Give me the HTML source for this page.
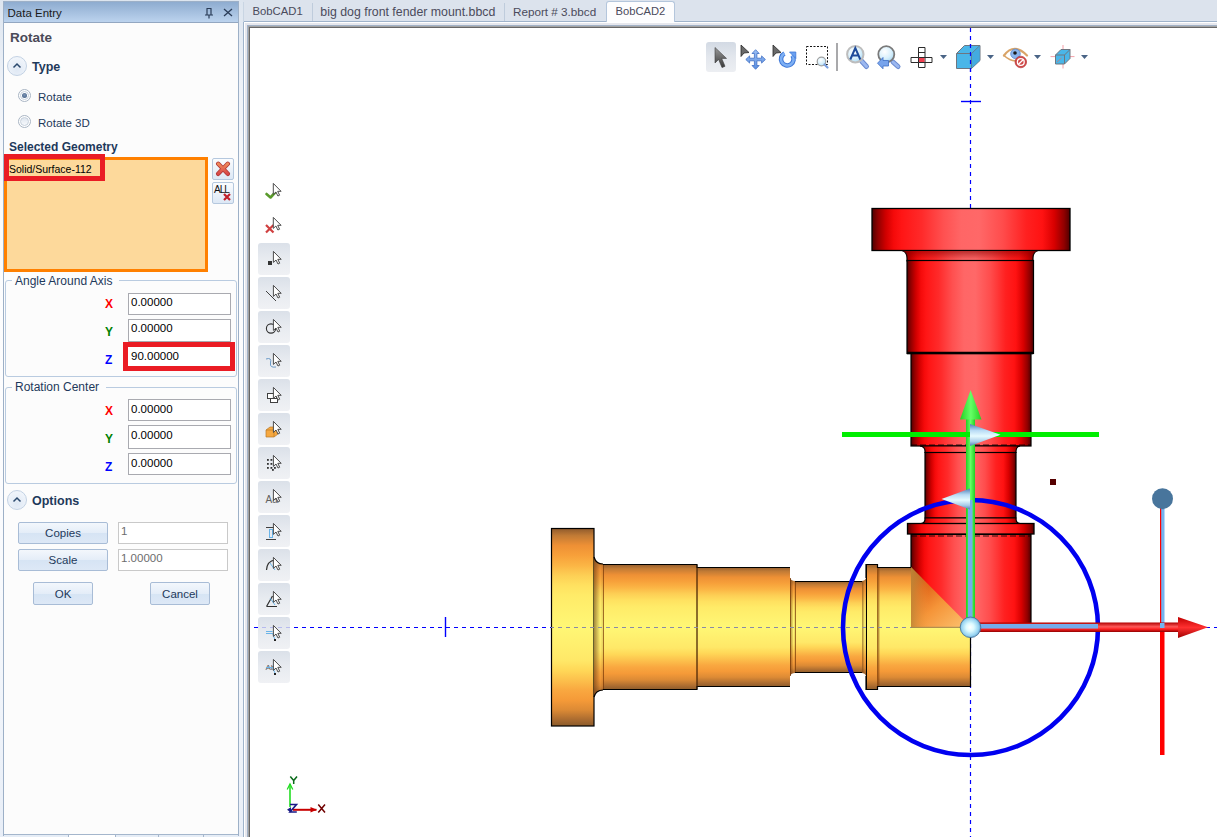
<!DOCTYPE html>
<html><head><meta charset="utf-8">
<style>
*{box-sizing:border-box}
html,body{margin:0;padding:0}
body{width:1217px;height:837px;overflow:hidden;position:relative;background:linear-gradient(#dde5ef 0%,#eef2f8 10%,#fbfcfd 25%,#fdfdfe 50%,#f8fafd 70%,#e8eef7 100%);font-family:"Liberation Sans",sans-serif;font-size:12px;color:#1e395b}
.a{position:absolute}
.t{position:absolute;white-space:nowrap;line-height:1}
/* panel */
#panel{left:3px;top:1px;width:236px;height:835px;background:#fcfcfc;border:1px solid #9db0c7}
#phead{left:0;top:0;width:234px;height:21px;background:linear-gradient(#8eacd0,#bcd2ec);border-bottom:1px solid #94a8c2}
.btn{position:absolute;border:1px solid #a8bcd6;border-radius:2px;background:linear-gradient(#f3f7fc 0%,#e4edf8 50%,#d6e4f4 51%,#dde8f6 100%);color:#1e395b;text-align:center;font-size:12px}
.inp{position:absolute;background:#fff;border:1px solid #a9aab0}
.grp{position:absolute;border:1px solid #b9cbe0;border-radius:3px}
.lx{position:absolute;font-weight:bold;font-size:12px;line-height:1}
.exp{position:absolute;width:20px;height:20px;border-radius:50%;border:1px solid #c3d2e4;background:radial-gradient(circle at 50% 70%,#dfe8f4,#f6f9fd)}
.radio{position:absolute;width:13px;height:13px;border-radius:50%;border:1px solid #9aaabb;background:#fff}
</style></head><body>

<!-- LEFT PANEL -->
<div id="panel" class="a"></div>
<div class="a" style="left:4px;top:2px;width:234px;height:20px;background:linear-gradient(#8eacd0,#bcd3ee)"></div>
<div class="a" style="left:4px;top:22px;width:234px;height:1px;background:#93a7c1"></div>
<div class="t" style="left:7.5px;top:8px;font-size:11.5px;color:#1a1a1a">Data Entry</div>
<!-- pin -->
<svg class="a" style="left:204px;top:7px" width="10" height="12" viewBox="0 0 10 12"><path d="M2.5 1.5h5M3 1.5v6M7 1.5v6M1 8h8M5 8v3.5" stroke="#2a3c58" stroke-width="1.2" fill="none"/></svg>
<!-- close -->
<svg class="a" style="left:223px;top:8px" width="10" height="9" viewBox="0 0 10 9"><path d="M1 1L9 8M9 1L1 8" stroke="#2a3c58" stroke-width="1.3" fill="none"/></svg>

<div class="t" style="left:10px;top:31px;font-size:13.5px;font-weight:bold;color:#4a4a58">Rotate</div>

<div class="exp" style="left:7px;top:56px"></div>
<svg class="a" style="left:12px;top:62px" width="10" height="7"><path d="M1.5 5.5L5 2L8.5 5.5" stroke="#2c4a6e" stroke-width="1.5" fill="none"/></svg>
<div class="t" style="left:32px;top:61px;font-size:12.5px;font-weight:bold;color:#1e395b">Type</div>

<div class="radio" style="left:18px;top:89px;border-color:#a9b5c4"></div>
<div class="a" style="left:20px;top:91px;width:9px;height:9px;border-radius:50%;border:1px solid #c5cfdb;background:#fff"></div>
<div class="a" style="left:22px;top:93px;width:5px;height:5px;border-radius:50%;background:radial-gradient(circle at 50% 40%,#7d94b4,#3c5a80)"></div>
<div class="t" style="left:38px;top:92px;font-size:11.5px;color:#1e395b">Rotate</div>
<div class="radio" style="left:18px;top:115px;border-color:#a9b5c4"></div>
<div class="a" style="left:20px;top:117px;width:9px;height:9px;border-radius:50%;border:1px solid #c5cfdb;background:linear-gradient(#dfe6ef,#f7f9fc)"></div>
<div class="t" style="left:38px;top:118px;font-size:11.5px;color:#1e395b">Rotate 3D</div>

<div class="t" style="left:9px;top:141px;font-size:12px;font-weight:bold;color:#1e395b">Selected Geometry</div>

<div class="a" style="left:4px;top:157px;width:204px;height:115px;background:#fdd99b;border:3px solid #ff8000"></div>
<div class="a" style="left:4px;top:154px;width:101px;height:27px;border:5px solid #ea1c24"></div>
<div class="t" style="left:9px;top:163.5px;font-size:10.5px;color:#000">Solid/Surface-112</div>

<div class="btn" style="left:212px;top:158px;width:22px;height:22px;border-color:#b5c8de;background:linear-gradient(#fbfcfe,#dde8f5)"></div>
<svg class="a" style="left:215px;top:161px" width="16" height="16" viewBox="0 0 16 16"><defs><linearGradient id="xg" x1="0" y1="0" x2="0" y2="1"><stop offset="0" stop-color="#f08a5a"/><stop offset="1" stop-color="#d84848"/></linearGradient></defs><path d="M3.2 2.8L12.8 12.8M12.8 2.8L3.2 12.8" stroke="#b03636" stroke-width="4.4" stroke-linecap="round"/><path d="M3.2 2.8L12.8 12.8M12.8 2.8L3.2 12.8" stroke="url(#xg)" stroke-width="2.8" stroke-linecap="round"/></svg>
<div class="btn" style="left:212px;top:182px;width:22px;height:22px;border-color:#b5c8de;background:linear-gradient(#fbfcfe,#dde8f5)"></div>
<div class="t" style="left:214px;top:185px;font-size:10px;color:#111;letter-spacing:-1px">ALL</div>
<svg class="a" style="left:222px;top:192px" width="10" height="10" viewBox="0 0 10 10"><path d="M2 2L8 8M8 2L2 8" stroke="#c0202a" stroke-width="2.2"/></svg>

<!-- group 1 -->
<div class="grp" style="left:5px;top:280px;width:232px;height:97px"></div>
<div class="a" style="left:12px;top:276px;width:107px;height:8px;background:#fcfcfc"></div>
<div class="t" style="left:15px;top:274.8px;font-size:12px;color:#1e395b">Angle Around Axis</div>
<div class="lx" style="left:105px;top:298px;color:#f00">X</div>
<div class="lx" style="left:105px;top:326px;color:#008000">Y</div>
<div class="lx" style="left:105px;top:354px;color:#00f">Z</div>
<div class="inp" style="left:128px;top:293px;width:103px;height:22px"></div>
<div class="t" style="left:131px;top:296.5px;font-size:11.5px;color:#000">0.00000</div>
<div class="inp" style="left:128px;top:319px;width:103px;height:23px"></div>
<div class="t" style="left:131px;top:322.5px;font-size:11.5px;color:#000">0.00000</div>
<div class="inp" style="left:128px;top:345px;width:103px;height:22px;border:none"></div>
<div class="a" style="left:123px;top:342px;width:112px;height:29px;border:5px solid #ea1c24"></div>
<div class="t" style="left:131px;top:350.5px;font-size:11.5px;color:#000">90.00000</div>

<!-- group 2 -->
<div class="grp" style="left:5px;top:387px;width:232px;height:97px"></div>
<div class="a" style="left:12px;top:382px;width:94px;height:8px;background:#fcfcfc"></div>
<div class="t" style="left:15px;top:381px;font-size:12px;color:#1e395b">Rotation Center</div>
<div class="lx" style="left:105px;top:405px;color:#f00">X</div>
<div class="lx" style="left:105px;top:433px;color:#008000">Y</div>
<div class="lx" style="left:105px;top:461px;color:#00f">Z</div>
<div class="inp" style="left:128px;top:399px;width:103px;height:22px"></div>
<div class="t" style="left:131px;top:403.5px;font-size:11.5px;color:#000">0.00000</div>
<div class="inp" style="left:128px;top:425px;width:103px;height:24px"></div>
<div class="t" style="left:131px;top:429.5px;font-size:11.5px;color:#000">0.00000</div>
<div class="inp" style="left:128px;top:453px;width:103px;height:22px"></div>
<div class="t" style="left:131px;top:457.5px;font-size:11.5px;color:#000">0.00000</div>

<!-- options -->
<div class="exp" style="left:7px;top:490px"></div>
<svg class="a" style="left:12px;top:496px" width="10" height="7"><path d="M1.5 5.5L5 2L8.5 5.5" stroke="#2c4a6e" stroke-width="1.5" fill="none"/></svg>
<div class="t" style="left:32px;top:495px;font-size:12.5px;font-weight:bold;color:#1e395b">Options</div>

<div class="btn" style="left:18px;top:522px;width:90px;height:22px"></div>
<div class="t" style="left:18px;top:528px;width:90px;text-align:center;font-size:11.5px;color:#1e395b">Copies</div>
<div class="btn" style="left:18px;top:549px;width:90px;height:22px"></div>
<div class="t" style="left:18px;top:555px;width:90px;text-align:center;font-size:11.5px;color:#1e395b">Scale</div>
<div class="inp" style="left:118px;top:522px;width:110px;height:22px;border-color:#c9c9c9"></div>
<div class="t" style="left:121px;top:526px;font-size:11.5px;color:#6d6d6d">1</div>
<div class="inp" style="left:118px;top:549px;width:110px;height:22px;border-color:#c9c9c9"></div>
<div class="t" style="left:121px;top:553px;font-size:11.5px;color:#6d6d6d">1.00000</div>

<div class="btn" style="left:33px;top:582px;width:60px;height:23px"></div>
<div class="t" style="left:33px;top:588.5px;width:60px;text-align:center;font-size:11.5px;color:#1e395b">OK</div>
<div class="btn" style="left:150px;top:582px;width:60px;height:23px"></div>
<div class="t" style="left:150px;top:588.5px;width:60px;text-align:center;font-size:11.5px;color:#1e395b">Cancel</div>

<!-- bottom tabs -->
<div class="a" style="left:4px;top:835px;width:234px;height:2px;background:#e6edf6"></div>
<div class="a" style="left:69px;top:835px;width:46px;height:2px;background:#fff"></div>
<div class="a" style="left:4px;top:834px;width:234px;height:1px;background:#a4b6cc"></div>
<div class="a" style="left:68px;top:834px;width:1px;height:3px;background:#a4b6cc"></div>
<div class="a" style="left:115px;top:834px;width:1px;height:3px;background:#a4b6cc"></div>
<div class="a" style="left:158px;top:834px;width:1px;height:3px;background:#a4b6cc"></div>
<div class="a" style="left:203px;top:834px;width:1px;height:3px;background:#a4b6cc"></div>


<!-- TAB STRIP -->
<div class="a" style="left:243px;top:0;width:974px;height:22px;background:#dce3ed"></div>
<div class="a" style="left:243px;top:21px;width:974px;height:1px;background:#9fb3cb"></div>
<div class="a" style="left:243px;top:2px;width:1px;height:20px;background:#c9d5e3"></div>
<div class="a" style="left:312px;top:3px;width:1px;height:18px;background:#bfccdc"></div>
<div class="a" style="left:504px;top:3px;width:1px;height:18px;background:#bfccdc"></div>
<div class="a" style="left:606px;top:1px;width:69px;height:21px;background:#fdfdfe;border:1px solid #b4c6dc;border-bottom:none;border-radius:3px 3px 0 0"></div>
<div class="t" style="left:252.5px;top:6px;font-size:11.3px;color:#4b4b5c">BobCAD1</div>
<div class="t" style="left:320.3px;top:6px;font-size:12.35px;color:#4b4b5c">big dog front fender mount.bbcd</div>
<div class="t" style="left:513px;top:6px;font-size:11.7px;color:#4b4b5c">Report # 3.bbcd</div>
<div class="t" style="left:615.5px;top:6px;font-size:11.2px;color:#4b4b5c">BobCAD2</div>

<!-- VIEWPORT FRAME -->
<div class="a" style="left:243px;top:22px;width:974px;height:815px;background:#fff;border-left:1px solid #9fb3cb"></div>
<div class="a" style="left:245px;top:23px;width:972px;height:814px;background:#e6e7ed"></div>
<div class="a" style="left:247px;top:25px;width:970px;height:812px;background:#a2b2c7"></div>
<div class="a" style="left:248px;top:26px;width:969px;height:811px;background:#a3a3a3"></div>
<div class="a" style="left:249px;top:27px;width:968px;height:810px;background:#676767"></div>
<div class="a" style="left:250px;top:28px;width:967px;height:809px;background:#fff"></div>

<svg class="a" style="left:0;top:0" width="1217" height="837" viewBox="0 0 1217 837">
<defs>
<linearGradient id="og" x1="0" y1="0" x2="0" y2="1">
 <stop offset="0" stop-color="#8f5a2c"/>
 <stop offset="0.035" stop-color="#c07a35"/>
 <stop offset="0.086" stop-color="#ee9035"/>
 <stop offset="0.136" stop-color="#f7a03a"/>
 <stop offset="0.187" stop-color="#fbb545"/>
 <stop offset="0.237" stop-color="#fdcf55"/>
 <stop offset="0.288" stop-color="#ffe160"/>
 <stop offset="0.338" stop-color="#ffeb68"/>
 <stop offset="0.5" stop-color="#fff775"/>
 <stop offset="0.667" stop-color="#ffe868"/>
 <stop offset="0.717" stop-color="#ffd858"/>
 <stop offset="0.768" stop-color="#fcc04c"/>
 <stop offset="0.818" stop-color="#f9a840"/>
 <stop offset="0.869" stop-color="#f59a38"/>
 <stop offset="0.919" stop-color="#dc8a35"/>
 <stop offset="0.97" stop-color="#a86a30"/>
 <stop offset="1" stop-color="#8a5a2a"/>
</linearGradient>
<linearGradient id="ogl" x1="0" y1="0" x2="0" y2="1">
 <stop offset="0.000" stop-color="#fff775"/>
 <stop offset="0.334" stop-color="#ffe868"/>
 <stop offset="0.434" stop-color="#ffd858"/>
 <stop offset="0.536" stop-color="#fcc04c"/>
 <stop offset="0.636" stop-color="#f9a840"/>
 <stop offset="0.738" stop-color="#f59a38"/>
 <stop offset="0.838" stop-color="#dc8a35"/>
 <stop offset="0.940" stop-color="#a86a30"/>
 <stop offset="1.000" stop-color="#8a5a2a"/>
</linearGradient>
<linearGradient id="rg" x1="0" y1="0" x2="1" y2="0">
 <stop offset="0" stop-color="#500000"/>
 <stop offset="0.03" stop-color="#900000"/>
 <stop offset="0.07" stop-color="#d00000"/>
 <stop offset="0.11" stop-color="#f50a0a"/>
 <stop offset="0.15" stop-color="#ff1515"/>
 <stop offset="0.25" stop-color="#ff2a2a"/>
 <stop offset="0.36" stop-color="#ff5050"/>
 <stop offset="0.45" stop-color="#ff6666"/>
 <stop offset="0.54" stop-color="#ff6868"/>
 <stop offset="0.66" stop-color="#ff4c4c"/>
 <stop offset="0.78" stop-color="#ff2020"/>
 <stop offset="0.86" stop-color="#ff1212"/>
 <stop offset="0.92" stop-color="#d80000"/>
 <stop offset="0.97" stop-color="#900000"/>
 <stop offset="1" stop-color="#500000"/>
</linearGradient>
<linearGradient id="tri" x1="911" y1="567" x2="960" y2="627" gradientUnits="userSpaceOnUse">
 <stop offset="0" stop-color="#8a4a14"/>
 <stop offset="0.3" stop-color="#e06418"/>
 <stop offset="0.6" stop-color="#f59438"/>
 <stop offset="1" stop-color="#fbbc68"/>
</linearGradient>
<linearGradient id="trih" x1="0" y1="0" x2="1" y2="0">
 <stop offset="0" stop-color="#c08838" stop-opacity="0.9"/>
 <stop offset="0.3" stop-color="#f09a40" stop-opacity="0"/>
 <stop offset="1" stop-color="#f09a40" stop-opacity="0"/>
</linearGradient>
<linearGradient id="fil" x1="0" y1="0" x2="1" y2="0">
 <stop offset="0" stop-color="#5a3010" stop-opacity="0.55"/>
 <stop offset="0.7" stop-color="#5a3010" stop-opacity="0"/>
 <stop offset="1" stop-color="#5a3010" stop-opacity="0.15"/>
</linearGradient>
<linearGradient id="gsh" x1="0" y1="0" x2="1" y2="0">
 <stop offset="0" stop-color="#22d022"/>
 <stop offset="0.5" stop-color="#66ff66"/>
 <stop offset="1" stop-color="#22d022"/>
</linearGradient>
<linearGradient id="cone" x1="0" y1="0" x2="0" y2="1">
 <stop offset="0" stop-color="#4f7fb5"/>
 <stop offset="0.3" stop-color="#b9dcf5"/>
 <stop offset="0.55" stop-color="#e6fbff"/>
 <stop offset="0.8" stop-color="#a8cce8"/>
 <stop offset="1" stop-color="#4f7fb5"/>
</linearGradient>
<linearGradient id="rsh" x1="0" y1="0" x2="0" y2="1">
 <stop offset="0" stop-color="#b00000"/>
 <stop offset="0.45" stop-color="#ff5a5a"/>
 <stop offset="0.7" stop-color="#ff2020"/>
 <stop offset="1" stop-color="#900000"/>
</linearGradient>
<linearGradient id="rah" x1="0" y1="0" x2="0" y2="1">
 <stop offset="0" stop-color="#c00000"/>
 <stop offset="0.5" stop-color="#ff3030"/>
 <stop offset="1" stop-color="#a00000"/>
</linearGradient>
<linearGradient id="shd" x1="0" y1="0" x2="0" y2="1">
 <stop offset="0" stop-color="#800000" stop-opacity="0.55"/>
 <stop offset="1" stop-color="#800000" stop-opacity="0"/>
</linearGradient>
<radialGradient id="sph" cx="0.48" cy="0.5" r="0.55">
 <stop offset="0" stop-color="#ffffff"/>
 <stop offset="0.35" stop-color="#dcfaff"/>
 <stop offset="0.75" stop-color="#98d4f2"/>
 <stop offset="1" stop-color="#5a92c0"/>
</radialGradient>
</defs>
<line x1="250" y1="627.5" x2="1217" y2="627.5" stroke="#0000ff" stroke-width="1.2" stroke-dasharray="4 4" stroke-dashoffset="4"/>
<line x1="970.5" y1="28" x2="970.5" y2="837" stroke="#0000ff" stroke-width="1.2" stroke-dasharray="4 4" stroke-dashoffset="0"/>
<line x1="445.5" y1="617" x2="445.5" y2="637" stroke="#0000ff" stroke-width="1.4"/>
<line x1="961" y1="101.5" x2="981" y2="101.5" stroke="#0000ff" stroke-width="1.4"/>
<rect x="551.5" y="528.5" width="42.5" height="197.5" fill="url(#og)" stroke="#000" stroke-width="1.2"/>
<path d="M594 557 Q596 564 603 564 L603 690 Q596 690 594 697 Z" fill="url(#og)"/>
<path d="M594 557 Q596 564 603 564 L603 690 Q596 690 594 697 Z" fill="url(#fil)"/>
<path d="M594 557 Q596 564 603 564 M603 690 Q596 690 594 697" stroke="#000" stroke-width="1.2" fill="none"/>
<rect x="603" y="564" width="94" height="126" fill="url(#og)"/>
<rect x="697" y="567" width="93" height="120" fill="url(#og)"/>
<path d="M790 578 Q791 581 795 581 L795 673 Q791 673 790 676 Z" fill="url(#og)"/>
<path d="M790 578 Q791 581 795 581 L795 673 Q791 673 790 676 Z" fill="url(#fil)"/>
<rect x="795" y="581" width="67" height="92" fill="url(#og)"/>
<path d="M862 581 Q865 581 866 578 L866 676 Q865 673 862 673 Z" fill="url(#og)"/>
<path d="M862 581 Q865 581 866 578 L866 676 Q865 673 862 673 Z" fill="url(#fil)"/>
<rect x="866" y="564" width="12" height="126" fill="url(#og)"/>
<rect x="878" y="567" width="33" height="120" fill="url(#og)"/>
<rect x="911" y="627" width="59" height="60" fill="url(#ogl)"/>
<path d="M603 564.5 H697 V567.5 H790 M795 581.5 H862 M866 578 V564.5 H877.5 V567.5 H911 M603 689.5 H697 V686.5 H790 M795 672.5 H862 M866 676 V689.5 H877.5 V686.5 H970.5 V627" stroke="#000" stroke-width="1.2" fill="none"/>
<line x1="603.5" y1="565" x2="603.5" y2="689" stroke="#7a3a08" stroke-width="0.9" opacity="0.8"/>
<line x1="697" y1="568" x2="697" y2="686" stroke="#7a3a08" stroke-width="0.9" opacity="0.8"/>
<line x1="790.5" y1="578" x2="790.5" y2="676" stroke="#7a3a08" stroke-width="0.9" opacity="0.8"/>
<line x1="795.5" y1="582" x2="795.5" y2="672" stroke="#7a3a08" stroke-width="0.9" opacity="0.8"/>
<line x1="877.5" y1="568" x2="877.5" y2="686" stroke="#7a3a08" stroke-width="0.9" opacity="0.8"/>
<line x1="878.8" y1="568" x2="878.8" y2="686" stroke="#7a3a08" stroke-width="0.9" opacity="0.8"/>
<line x1="866.5" y1="565" x2="866.5" y2="689" stroke="#000" stroke-width="1"/>
<line x1="697" y1="565" x2="697" y2="689" stroke="#3a2008" stroke-width="0.9"/>
<line x1="551" y1="627.5" x2="911" y2="627.5" stroke="#8a8aa6" stroke-width="1.2" stroke-dasharray="4 4" stroke-dashoffset="1"/>
<rect x="872" y="208.5" width="198" height="42" fill="url(#rg)" stroke="#000" stroke-width="1.3"/>
<path d="M902 250.5 Q907 252 907 258 L907 261 L1033 261 L1033 258 Q1033 252 1038 250.5 Z" fill="url(#rg)" stroke="#000" stroke-width="1.2"/>
<path d="M902 251 Q907 252 907 258 L907 260 L1033 260 L1033 258 Q1033 252 1038 251 Z" fill="url(#shd)"/>
<rect x="907" y="260.5" width="126.5" height="93" fill="url(#rg)" stroke="#000" stroke-width="1.2"/>
<rect x="911" y="353.5" width="120" height="92.5" fill="url(#rg)" stroke="#000" stroke-width="1.2"/>
<line x1="907" y1="353" x2="1033" y2="353" stroke="#000" stroke-width="2.4"/>
<path d="M920 446 Q925 447 925 451 L925 452.5 L1016 452.5 L1016 451 Q1016 447 1020 446 Z" fill="url(#rg)" stroke="#000" stroke-width="1.2"/>
<rect x="925" y="452.5" width="91" height="65.5" fill="url(#rg)" stroke="#000" stroke-width="1.2"/>
<path d="M925 518 L925 519 Q925 523 921 523.5 L1020 523.5 Q1016 523 1016 519 L1016 518 Z" fill="url(#rg)" stroke="#000" stroke-width="1.2"/>
<rect x="907.5" y="523.5" width="126.5" height="10.5" fill="url(#rg)" stroke="#000" stroke-width="1.3"/>
<rect x="911" y="534.5" width="120" height="93" fill="url(#rg)"/>
<path d="M911 568 V534.5 H1031 V627" fill="none" stroke="#000" stroke-width="1.2"/>
<line x1="911" y1="536" x2="1031" y2="536" stroke="#000" stroke-width="0.8" stroke-dasharray="6 3"/>
<line x1="911" y1="445" x2="1031" y2="445" stroke="#000" stroke-width="0.8" stroke-dasharray="6 3"/>
<path d="M911 567 L970.5 627 L911 627 Z" fill="url(#tri)"/>
<path d="M911 627.3 L970 627.3" fill="none" stroke="#a09050" stroke-width="1"/>
<path d="M911 567 L970.5 627 L911 627 Z" fill="url(#trih)"/>
<circle cx="970.5" cy="627.5" r="127.5" fill="none" stroke="#0000f0" stroke-width="4.6"/>
<rect x="1160" y="627" width="4.5" height="128" fill="#ff0000"/>
<rect x="1161" y="508" width="3.5" height="120" fill="#74b4f0"/>
<rect x="1160" y="508" width="1.2" height="120" fill="#ff0000"/>
<circle cx="1162.5" cy="498.7" r="10.5" fill="#48759c"/>
<rect x="975" y="622.5" width="204" height="9.5" fill="url(#rsh)"/>
<rect x="978" y="624" width="120" height="4.5" fill="#74acec"/>
<rect x="1160" y="623" width="4.5" height="5" fill="#74b4f0"/>
<path d="M1178 617 L1208 627.3 L1178 638 Z" fill="url(#rah)"/>
<rect x="966" y="418" width="9" height="210" fill="url(#gsh)"/>
<rect x="968" y="500" width="4.5" height="128" fill="#74acec"/>
<path d="M960 419.5 L970.6 390 L981.5 419.5 Z" fill="url(#gsh)"/>
<rect x="842" y="432" width="257" height="5" fill="#00ee00"/>
<path d="M970 424 L1000.5 434.8 L970 446 Z" fill="url(#cone)"/>
<path d="M970 488.5 L941.5 499 L970 509.5 Z" fill="url(#cone)"/>
<circle cx="970.5" cy="627.3" r="10.3" fill="url(#sph)" stroke="#3d6e98" stroke-width="0.8"/>
<rect x="1050" y="479" width="6" height="6" fill="#560000"/>
</svg>
<svg class="a" style="left:0;top:0" width="1217" height="837" viewBox="0 0 1217 837">
<defs>
<linearGradient id="tbb" x1="0" y1="0" x2="0" y2="1">
 <stop offset="0" stop-color="#d3dae4"/>
 <stop offset="0.5" stop-color="#e3e7ed"/>
 <stop offset="1" stop-color="#eceef2"/>
</linearGradient>
<linearGradient id="arrg" x1="0" y1="0" x2="0" y2="1">
 <stop offset="0" stop-color="#9a9a9a"/>
 <stop offset="1" stop-color="#3a3a3a"/>
</linearGradient>
<radialGradient id="lens" cx="0.4" cy="0.35" r="0.7">
 <stop offset="0" stop-color="#ffffff"/>
 <stop offset="0.6" stop-color="#d8f0fc"/>
 <stop offset="1" stop-color="#a8d8f4"/>
</radialGradient>
<linearGradient id="cub" x1="0" y1="0" x2="0" y2="1">
 <stop offset="0" stop-color="#5cc4f0"/>
 <stop offset="1" stop-color="#40a8dc"/>
</linearGradient>
<linearGradient id="bluearr" x1="0" y1="0" x2="0" y2="1">
 <stop offset="0" stop-color="#9cc0f4"/>
 <stop offset="1" stop-color="#5a8ee0"/>
</linearGradient>
</defs>
<rect x="706" y="42" width="30" height="30" rx="3" fill="url(#tbb)"/>
<path d="M715 47.5 L715 63 L718.6 59.4 L722 67.6 L725 66.3 L721.7 58.4 L726.5 58.4 Z" fill="url(#arrg)" stroke="#3c3c3c" stroke-width="0.6" stroke-linejoin="round"/>
<path d="M741 45 L741 56.5 L744 53 L749 52.5 Z" fill="#6a6a6a" stroke="#2a2a2a" stroke-width="0.8" stroke-linejoin="round"/>
<path d="M773 45 L773 56.5 L776 53 L781 52.5 Z" fill="#6a6a6a" stroke="#2a2a2a" stroke-width="0.8" stroke-linejoin="round"/>
<path d="M754.4 53.5 L752.0 53.5 L755.6 49.7 L759.2 53.5 L756.9 53.5 L756.9 58.2 L761.6 58.2 L761.6 55.9 L765.4 59.5 L761.6 63.1 L761.6 60.8 L756.9 60.8 L756.9 65.5 L759.2 65.5 L755.6 69.3 L752.0 65.5 L754.4 65.5 L754.4 60.8 L749.6 60.8 L749.6 63.1 L745.8 59.5 L749.6 55.9 L749.6 58.2 L754.4 58.2 Z" fill="url(#bluearr)" stroke="#3f6fc4" stroke-width="0.8" stroke-linejoin="round"/>
<path d="M784.5 53.5 A6.3 6.3 0 1 0 792.3 55.3" fill="none" stroke="#3f78d8" stroke-width="4.6"/>
<path d="M784.5 53.5 A6.3 6.3 0 1 0 792.3 55.3" fill="none" stroke="#7eb0f4" stroke-width="2.6"/>
<path d="M789.5 52 L795.8 52 L795.8 58.5 Z" fill="#6aa0f0" stroke="#3f78d8" stroke-width="0.8"/>
<rect x="806.5" y="46.5" width="21" height="18" fill="none" stroke="#111" stroke-width="1" stroke-dasharray="2 1.5"/>
<circle cx="821.5" cy="61.5" r="4.3" fill="url(#lens)" stroke="#a0a0a0" stroke-width="1.2"/>
<path d="M824.5 64.5 L827.5 67.5" stroke="#7aa0e0" stroke-width="2.2" stroke-linecap="round"/>
<rect x="836" y="43" width="2" height="28" fill="#a9a9ab"/>
<path d="M861.5 61 L866.5 66.5" stroke="#6c8bd0" stroke-width="5" stroke-linecap="round"/>
<path d="M861.5 61 L866.5 66.5" stroke="#9cb8f0" stroke-width="3" stroke-linecap="round"/>
<circle cx="855.3" cy="54.2" r="8.2" fill="url(#lens)" stroke="#bdbdbd" stroke-width="2"/>
<path d="M850.3 59.5 L855.3 48 L860.3 59.5 M852.2 55.5 H858.4" fill="none" stroke="#1e4a9a" stroke-width="2"/>
<path d="M893 62 L898 66.5" stroke="#6c8bd0" stroke-width="5" stroke-linecap="round"/>
<path d="M893 62 L898 66.5" stroke="#9cb8f0" stroke-width="3" stroke-linecap="round"/>
<circle cx="886.3" cy="54.2" r="8" fill="url(#lens)" stroke="#7a7a7a" stroke-width="1.8"/>
<path d="M877.5 63.2 L883 57.5 L883 60.5 L888.5 60.5 L888.5 66 L883 66 L883 68.8 Z" fill="#78a4ec" stroke="#3f6fc4" stroke-width="0.8" stroke-linejoin="round"/>
<path d="M918.5 47.5 H925 V57.5 H932 V62.5 H925 V67.5 H918.5 V62.5 H911 V57.5 H918.5 Z" fill="#fff" stroke="#2a2a2a" stroke-width="1"/>
<path d="M918.5 52.5 H925 M918.5 57.5 H925 M918.5 62.5 H925 M918.5 57.5 V62.5 M925 57.5 V62.5" stroke="#2a2a2a" stroke-width="1"/>
<rect x="919" y="58" width="5.5" height="4" fill="#f04050"/>
<path d="M940 55 L947 55 L943.5 59 Z" fill="#4a6486"/>
<path d="M956.5 53.5 L964.5 45.5 L980 45.5 L980 60.5 L971.5 68.5 L956.5 68.5 Z" fill="#4ab6e8" stroke="#6e7680" stroke-width="1"/>
<path d="M956.5 53.5 H971.5 V68.5 M971.5 53.5 L980 45.5" fill="none" stroke="#6e7680" stroke-width="1"/>
<path d="M971.5 53.5 L980 45.5 L980 60.5 L971.5 68.5 Z" fill="#3fa4d8" opacity="0.6"/>
<line x1="970.5" y1="44" x2="970.5" y2="72" stroke="#0000ff" stroke-width="1.2" stroke-dasharray="4 4"/>
<path d="M987 55 L994 55 L990.5 59 Z" fill="#4a6486"/>
<path d="M1004 55.5 Q1014 42 1027 55.5" fill="none" stroke="#d9a468" stroke-width="2.2" stroke-linecap="round"/>
<path d="M1004 55.5 Q1012 63 1020 60" fill="none" stroke="#d9a468" stroke-width="1.6" stroke-linecap="round"/>
<circle cx="1015.5" cy="53.8" r="4.8" fill="#8ab4ec" stroke="#5a86c8" stroke-width="0.8"/>
<circle cx="1015" cy="53" r="1.8" fill="#1a1a1a"/>
<circle cx="1020.8" cy="62" r="5.8" fill="#d04848" stroke="#b03030" stroke-width="0.6"/>
<circle cx="1020.8" cy="62" r="3.4" fill="none" stroke="#fff" stroke-width="1.3"/>
<path d="M1018.5 64.3 L1023.1 59.7" stroke="#fff" stroke-width="1.3"/>
<path d="M1034 55 L1041 55 L1037.5 59 Z" fill="#4a6486"/>
<path d="M1050.5 56.6 H1074.5 M1063 45 V68.5" stroke="#f4a0a8" stroke-width="1"/>
<path d="M1055.5 55 L1061 49.5 L1070 49.5 L1070 58.5 L1064.5 64 L1055.5 64 Z" fill="#4ab6e8" stroke="#6e7680" stroke-width="1"/>
<path d="M1055.5 55 H1064.5 V64 M1064.5 55 L1070 49.5" fill="none" stroke="#6e7680" stroke-width="1"/>
<path d="M1057 62 L1061.5 58" stroke="#c08080" stroke-width="0.9"/>
<path d="M1081 55 L1088 55 L1084.5 59 Z" fill="#4a6486"/>
<rect x="258" y="243" width="32" height="32" rx="3" fill="url(#tbb)" opacity="0.82"/>
<rect x="258" y="277" width="32" height="32" rx="3" fill="url(#tbb)" opacity="0.82"/>
<rect x="258" y="311" width="32" height="32" rx="3" fill="url(#tbb)" opacity="0.82"/>
<rect x="258" y="345" width="32" height="32" rx="3" fill="url(#tbb)" opacity="0.82"/>
<rect x="258" y="379" width="32" height="32" rx="3" fill="url(#tbb)" opacity="0.82"/>
<rect x="258" y="413" width="32" height="32" rx="3" fill="url(#tbb)" opacity="0.82"/>
<rect x="258" y="447" width="32" height="32" rx="3" fill="url(#tbb)" opacity="0.82"/>
<rect x="258" y="481" width="32" height="32" rx="3" fill="url(#tbb)" opacity="0.82"/>
<rect x="258" y="515" width="32" height="32" rx="3" fill="url(#tbb)" opacity="0.82"/>
<rect x="258" y="549" width="32" height="32" rx="3" fill="url(#tbb)" opacity="0.82"/>
<rect x="258" y="583" width="32" height="32" rx="3" fill="url(#tbb)" opacity="0.82"/>
<rect x="258" y="617" width="32" height="32" rx="3" fill="url(#tbb)" opacity="0.82"/>
<rect x="258" y="651" width="32" height="32" rx="3" fill="url(#tbb)" opacity="0.82"/>
<path d="M266.5 194 L270.5 197.5 L276 191.5" fill="none" stroke="#5a9a2c" stroke-width="2.6" stroke-linecap="round" stroke-linejoin="round"/>
<path d="M273.3 183.4 L273.3 194.4 L275.90000000000003 192.0 L277.90000000000003 196.0 L279.6 195.20000000000002 L277.7 191.3 L281.1 191.3 Z" fill="#fff" stroke="#3a3a3a" stroke-width="0.9" stroke-linejoin="round"/>
<path d="M266 225 L273.5 232.5 M273.5 225 L266 232.5" stroke="#d04040" stroke-width="2.2"/>
<path d="M273.3 217.4 L273.3 228.4 L275.90000000000003 226.0 L277.90000000000003 230.0 L279.6 229.20000000000002 L277.7 225.3 L281.1 225.3 Z" fill="#fff" stroke="#3a3a3a" stroke-width="0.9" stroke-linejoin="round"/>
<rect x="268" y="261" width="4" height="4" fill="#333"/>
<path d="M273.4 251.4 L273.4 262.4 L276.0 260.0 L278.0 264.0 L279.7 263.2 L277.79999999999995 259.3 L281.2 259.3 Z" fill="#fff" stroke="#3a3a3a" stroke-width="0.9" stroke-linejoin="round"/>
<path d="M266 291 L276 301" stroke="#404040" stroke-width="1"/>
<path d="M273.4 285.4 L273.4 296.4 L276.0 294.0 L278.0 298.0 L279.7 297.2 L277.79999999999995 293.29999999999995 L281.2 293.29999999999995 Z" fill="#fff" stroke="#3a3a3a" stroke-width="0.9" stroke-linejoin="round"/>
<circle cx="271" cy="328.5" r="4.6" fill="none" stroke="#303030" stroke-width="1.1"/>
<path d="M273.4 319.4 L273.4 330.4 L276.0 328.0 L278.0 332.0 L279.7 331.2 L277.79999999999995 327.29999999999995 L281.2 327.29999999999995 Z" fill="#fff" stroke="#3a3a3a" stroke-width="0.9" stroke-linejoin="round"/>
<path d="M266 359 Q272 357 270.5 363 Q269.5 368 276 367" fill="none" stroke="#6a9ac8" stroke-width="1"/>
<path d="M273.4 353.4 L273.4 364.4 L276.0 362.0 L278.0 366.0 L279.7 365.2 L277.79999999999995 361.29999999999995 L281.2 361.29999999999995 Z" fill="#fff" stroke="#3a3a3a" stroke-width="0.9" stroke-linejoin="round"/>
<rect x="267.5" y="393.5" width="9" height="5" fill="#fff" stroke="#404040" stroke-width="1"/><rect x="270.5" y="398.5" width="7" height="4" fill="#fff" stroke="#404040" stroke-width="1"/>
<path d="M273.4 387.4 L273.4 398.4 L276.0 396.0 L278.0 400.0 L279.7 399.2 L277.79999999999995 395.29999999999995 L281.2 395.29999999999995 Z" fill="#fff" stroke="#3a3a3a" stroke-width="0.9" stroke-linejoin="round"/>
<path d="M266 430 L270 427 L278 427 L278 434 L274 437 L266 437 Z" fill="#f6a840" stroke="#b8782a" stroke-width="0.7"/><path d="M266 430 H274 V437 M274 430 L278 427" fill="none" stroke="#b8782a" stroke-width="0.7"/>
<path d="M273.4 421.4 L273.4 432.4 L276.0 430.0 L278.0 434.0 L279.7 433.2 L277.79999999999995 429.29999999999995 L281.2 429.29999999999995 Z" fill="#fff" stroke="#3a3a3a" stroke-width="0.9" stroke-linejoin="round"/>
<rect x="267" y="459" width="1.8" height="1.8" fill="#333"/><rect x="270.5" y="459" width="1.8" height="1.8" fill="#333"/><rect x="267" y="463" width="1.8" height="1.8" fill="#333"/><rect x="270.5" y="463" width="1.8" height="1.8" fill="#333"/><rect x="267" y="467" width="1.8" height="1.8" fill="#333"/><rect x="270.5" y="467" width="1.8" height="1.8" fill="#333"/><rect x="274" y="467" width="1.8" height="1.8" fill="#333"/><rect x="272" y="469" width="1.8" height="1.8" fill="#333"/>
<path d="M273.4 455.4 L273.4 466.4 L276.0 464.0 L278.0 468.0 L279.7 467.2 L277.79999999999995 463.29999999999995 L281.2 463.29999999999995 Z" fill="#fff" stroke="#3a3a3a" stroke-width="0.9" stroke-linejoin="round"/>
<text x="265.5" y="503" font-family="Liberation Sans" font-size="10" fill="#606060">Aa</text>
<path d="M273.4 489.4 L273.4 500.4 L276.0 498.0 L278.0 502.0 L279.7 501.2 L277.79999999999995 497.29999999999995 L281.2 497.29999999999995 Z" fill="#fff" stroke="#3a3a3a" stroke-width="0.9" stroke-linejoin="round"/>
<path d="M266 527.5 H276 M266 539.5 H276" stroke="#404040" stroke-width="1"/><rect x="269.5" y="529.5" width="3" height="8" fill="none" stroke="#6ab4e8" stroke-width="1"/>
<path d="M273.4 523.4 L273.4 534.4 L276.0 532.0 L278.0 536.0 L279.7 535.1999999999999 L277.79999999999995 531.3 L281.2 531.3 Z" fill="#fff" stroke="#3a3a3a" stroke-width="0.9" stroke-linejoin="round"/>
<path d="M266.5 570 Q267 561 275 560" fill="none" stroke="#303030" stroke-width="1.2"/><path d="M270 563 L275 570" stroke="#6ab4e8" stroke-width="1"/>
<path d="M273.4 557.4 L273.4 568.4 L276.0 566.0 L278.0 570.0 L279.7 569.1999999999999 L277.79999999999995 565.3 L281.2 565.3 Z" fill="#fff" stroke="#3a3a3a" stroke-width="0.9" stroke-linejoin="round"/>
<path d="M266.5 606.5 H277 M266.5 606.5 L272.5 596" fill="none" stroke="#303030" stroke-width="1.2"/><path d="M270 598 L275 605" stroke="#6ab4e8" stroke-width="1"/>
<path d="M273.4 591.4 L273.4 602.4 L276.0 600.0 L278.0 604.0 L279.7 603.1999999999999 L277.79999999999995 599.3 L281.2 599.3 Z" fill="#fff" stroke="#3a3a3a" stroke-width="0.9" stroke-linejoin="round"/>
<path d="M266 631.5 H272.5 M266 633.5 H272.5" stroke="#6ab4e8" stroke-width="1"/><path d="M272.5 633 L275 640" stroke="#6ab4e8" stroke-width="1"/><rect x="274" y="639" width="2" height="2" fill="#222"/>
<path d="M273.4 625.4 L273.4 636.4 L276.0 634.0 L278.0 638.0 L279.7 637.1999999999999 L277.79999999999995 633.3 L281.2 633.3 Z" fill="#fff" stroke="#3a3a3a" stroke-width="0.9" stroke-linejoin="round"/>
<text x="265.5" y="670" font-family="Liberation Sans" font-size="8" fill="#606060">Ab</text><path d="M266 667.5 H272.5 L275 673" fill="none" stroke="#6ab4e8" stroke-width="1"/><rect x="274" y="673" width="2" height="2" fill="#222"/>
<path d="M273.4 659.4 L273.4 670.4 L276.0 668.0 L278.0 672.0 L279.7 671.1999999999999 L277.79999999999995 667.3 L281.2 667.3 Z" fill="#fff" stroke="#3a3a3a" stroke-width="0.9" stroke-linejoin="round"/>
<path d="M290 807 V784" stroke="#22dd22" stroke-width="1.6"/>
<path d="M287.2 789.5 L290 784 L292.8 789.5" fill="none" stroke="#22dd22" stroke-width="1.3"/>
<path d="M290.3 776.5 L293.7 780.5 L297 776.5 M293.7 780.5 V784" fill="none" stroke="#0a6a1a" stroke-width="1.5"/>
<path d="M293 809.8 H316.5" stroke="#c80000" stroke-width="2"/>
<path d="M310.5 807 L316.8 809.8 L310.5 812.6 Z" fill="#c80000"/>
<path d="M318.3 804.5 L325 812.5 M325 804.5 L318.3 812.5" stroke="#700000" stroke-width="1.5"/>
<path d="M290 804.5 H296.5 L290 812 H296.8" fill="none" stroke="#1a1a86" stroke-width="1.6"/>
<path d="M291 807 L287 809.8 L291 812.5 Z" fill="#1a1a86"/>
</svg>
</body></html>
